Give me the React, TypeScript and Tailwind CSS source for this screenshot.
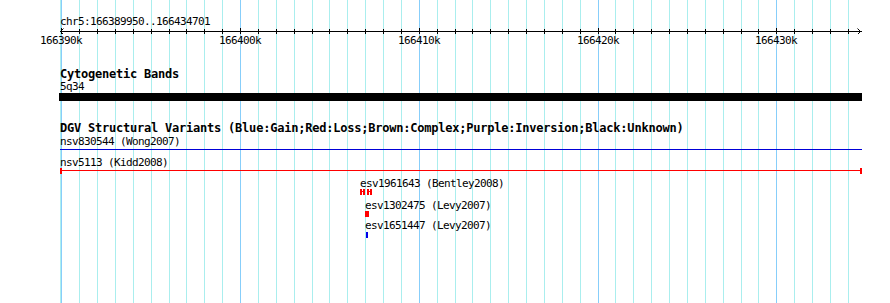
import React from "react";

const START = 166389950;
const SCALE = 0.017877;
const xOf = (p: number) => Math.round(60.4 + (p - START) * SCALE);
const ticks = Array.from({ length: 45 }, (_, k) => 166390000 + k * 1000);
const majors = ticks.filter((_, k) => k % 10 === 0);

const small = "h-[13px] text-[11px] leading-[13px] tracking-[-0.62px] whitespace-nowrap";
const bold = "h-[13px] text-[12px] leading-[13px] font-bold tracking-[-0.22px] whitespace-nowrap";

function CappedBar({ width, color }: { width: number; color: string }) {
  return (
    <svg width={width} height={6} shapeRendering="crispEdges" className="block">
      <rect x={0} y={0} width={2} height={6} fill={color} />
      <rect x={width - 2} y={0} width={2} height={6} fill={color} />
      <rect x={0} y={2} width={width} height={1} fill={color} />
    </svg>
  );
}

export default function App() {
  return (
    <div className="relative w-[890px] h-[303px] overflow-hidden bg-white text-black font-['DejaVu_Sans_Mono',monospace]">
      <svg className="absolute inset-0" width={890} height={303} shapeRendering="crispEdges">
        <line x1={60.5} y1={0} x2={60.5} y2={303} stroke="#aeeeee" />
        {ticks.map((p, k) => {
          const x = xOf(p) + 0.5;
          return (
            <line key={p} x1={x} y1={0} x2={x} y2={303} stroke={k % 10 === 0 ? "#87cefa" : "#aaeeee"} />
          );
        })}
      </svg>

      <div className="relative flex flex-col items-start pl-[60px] pt-[15px]">
        {/* Ruler */}
        <div className={small}>chr5:166389950..166434701</div>
        <svg width={802} height={6} className="block">
          <g shapeRendering="crispEdges">
            <line x1={0} y1={3.5} x2={802} y2={3.5} stroke="#000" />
            {ticks.map((p, k) => {
              const x = xOf(p) - 60 + 0.5;
              return <line key={p} x1={x} y1={k % 10 === 0 ? 0 : 1} x2={x} y2={6} stroke="#000" />;
            })}
          </g>
          <path d="M3.5 0.5 L0.5 3.5 L3.5 6.5" fill="none" stroke="#000" />
          <path d="M797.5 0.5 L800.5 3.5 L797.5 6.5" fill="none" stroke="#000" />
        </svg>
        <div className="relative h-[13px] w-[802px]">
          {majors.map((p) => (
            <span
              key={p}
              className="absolute top-0 -translate-x-1/2 text-[11px] leading-[13px] tracking-[-0.62px] whitespace-nowrap"
              style={{ left: xOf(p) - 60 }}
            >
              {p / 1000}k
            </span>
          ))}
        </div>

        {/* Cytogenetic Bands */}
        <div className={`${bold} mt-[21px]`}>Cytogenetic Bands</div>
        <div className="h-[12px] text-[11px] leading-[12px] tracking-[-0.62px] whitespace-nowrap">5q34</div>
        <div className="ml-[-1px] w-[803px] h-[8px] bg-black" />

        {/* DGV */}
        <div className={`${bold} mt-[21px]`}>
          DGV Structural Variants (Blue:Gain;Red:Loss;Brown:Complex;Purple:Inversion;Black:Unknown)
        </div>
        <div className={small}>nsv830544 (Wong2007)</div>
        <div className="mt-px w-[802px] h-px bg-[#0000d8]" />
        <div className={`${small} mt-[6px]`}>nsv5113 (Kidd2008)</div>
        <div className="mt-[-1px]">
          <CappedBar width={802} color="#ff0000" />
        </div>

        <div className="ml-[300px] flex flex-col items-start">
          <div className={`${small} mt-[3px]`}>esv1961643 (Bentley2008)</div>
          <div className="mt-[-1px] flex gap-[2px]">
            <CappedBar width={5} color="#ff0000" />
            <CappedBar width={5} color="#ff0000" />
          </div>
          <div className={`${small} ml-[5px] mt-[4px]`}>esv1302475 (Levy2007)</div>
          <div className="ml-[5px] mt-[-1px] w-[4px] h-[6px] bg-[#ff0000]" />
          <div className={`${small} ml-[5px] mt-[2px]`}>esv1651447 (Levy2007)</div>
          <div className="ml-[6px] mt-0 w-[2px] h-[6px] bg-[#0000e8]" />
        </div>
      </div>
    </div>
  );
}
